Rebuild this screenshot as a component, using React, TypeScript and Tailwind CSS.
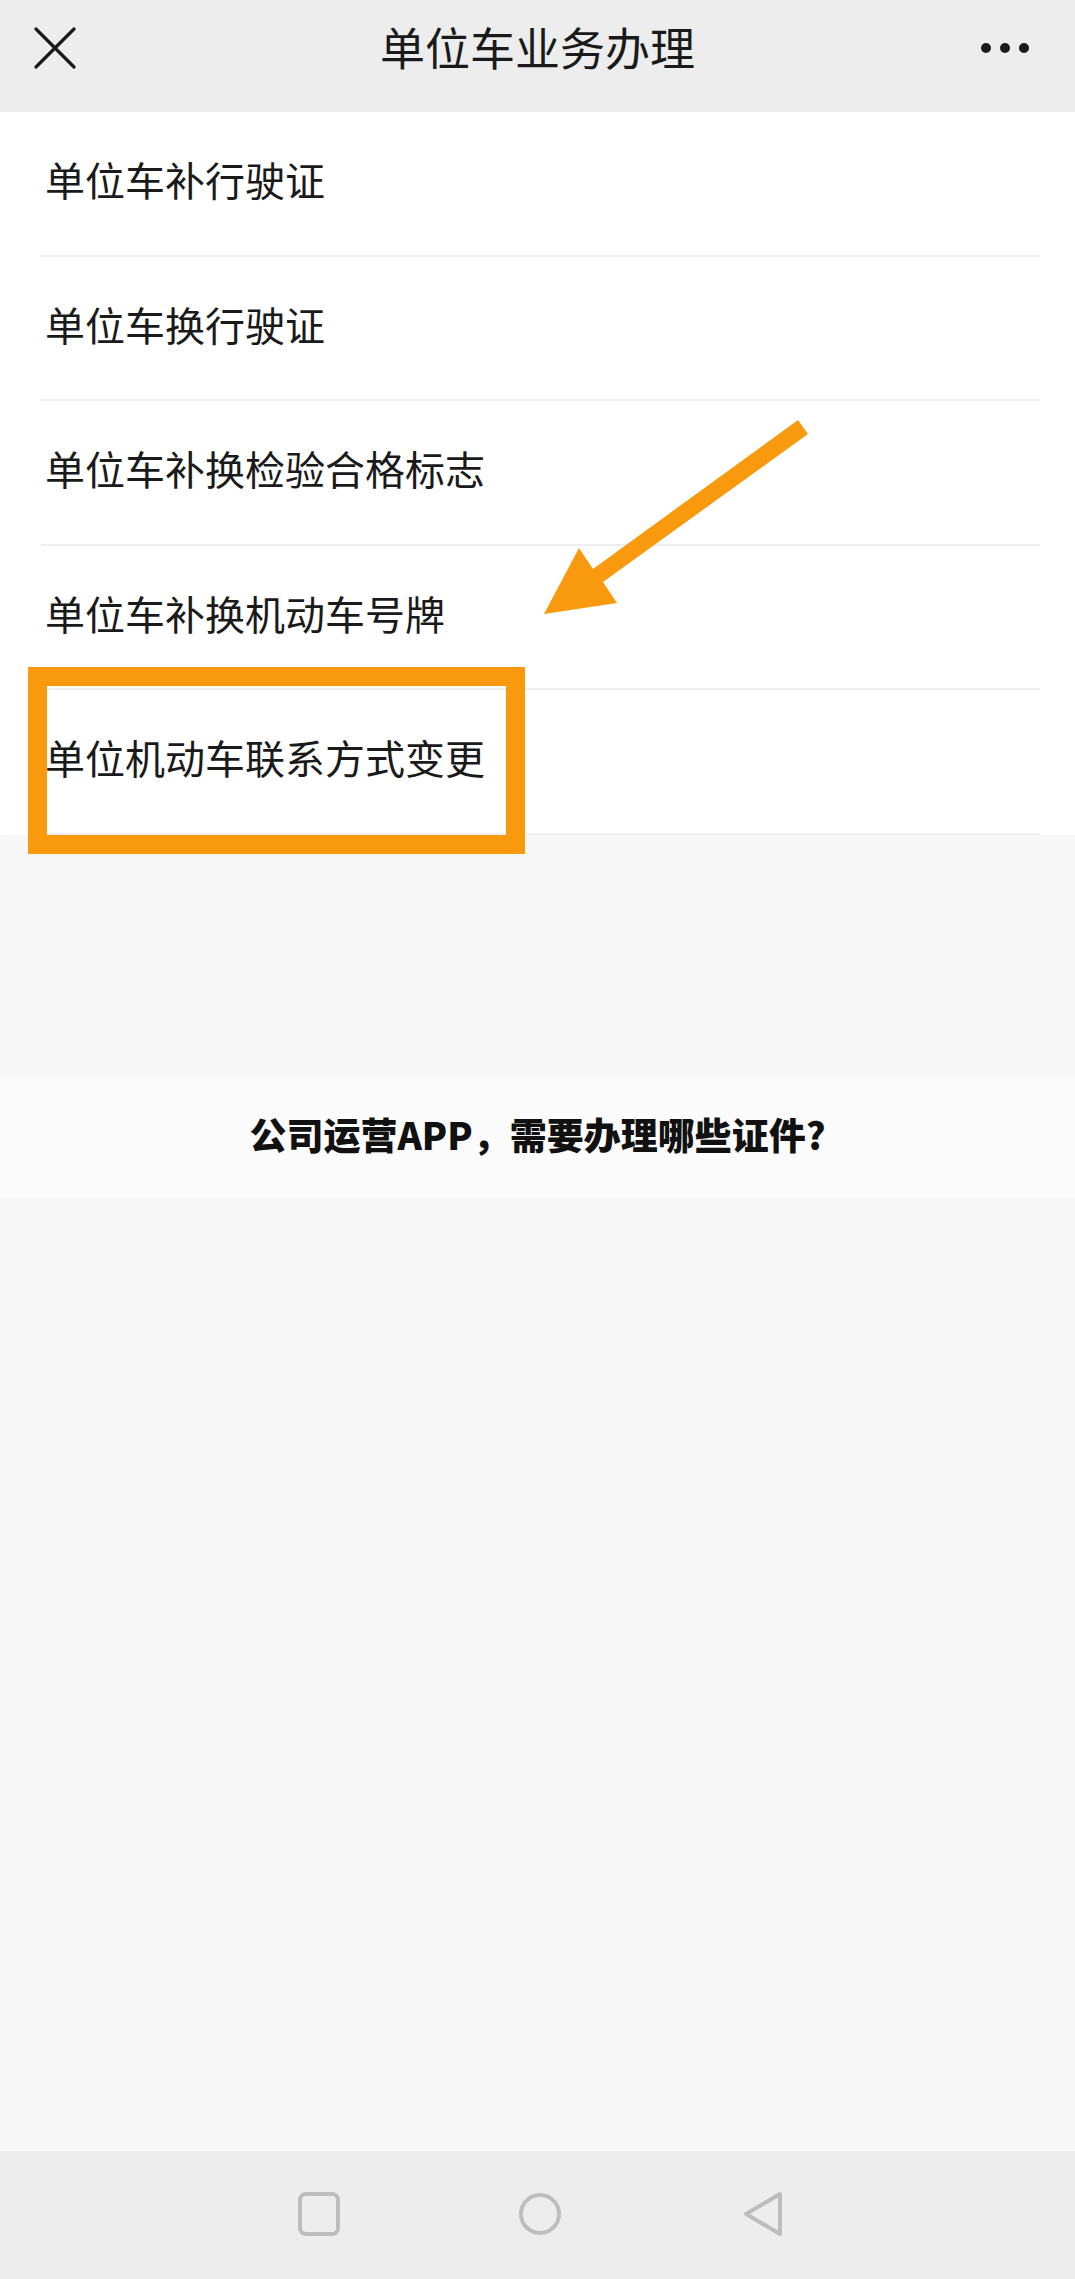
import React from 'react';

const items = [
  '单位车补行驶证',
  '单位车换行驶证',
  '单位车补换检验合格标志',
  '单位车补换机动车号牌',
  '单位机动车联系方式变更',
];

const cjk = { fontFamily: '"Noto Sans CJK SC", "Noto Sans", sans-serif' };

export default function App() {
  return (
    <div className="relative w-[1075px] h-[2279px] flex flex-col bg-[#f7f7f7] overflow-hidden" style={cjk}>
      {/* 顶部标题栏 */}
      <div className="relative h-[112px] shrink-0 bg-[#ededed] flex items-center justify-center">
        <svg className="absolute left-[34px] top-[27px]" width="42" height="42" viewBox="0 0 42 42">
          <path d="M2 2 L40 40 M40 2 L2 40" stroke="#1a1a1a" strokeWidth="3.2" strokeLinecap="round" />
        </svg>
        <div className="text-[45px] leading-none text-[#1a1a1a] -mt-[19px]">单位车业务办理</div>
        <div className="absolute right-[46px] top-[43px] flex gap-[9px]">
          <span className="w-[10px] h-[10px] rounded-full bg-[#1a1a1a]" />
          <span className="w-[10px] h-[10px] rounded-full bg-[#1a1a1a]" />
          <span className="w-[10px] h-[10px] rounded-full bg-[#1a1a1a]" />
        </div>
      </div>

      {/* 业务列表 */}
      <div className="bg-white shrink-0">
        {items.map((label) => (
          <div
            key={label}
            className="ml-[41px] mr-[35px] h-[144.5px] border-b-2 border-[#eeeeee] flex items-center pl-[4px] pb-[8px]"
          >
            <span className="text-[40px] leading-none text-[#1a1a1a]">{label}</span>
          </div>
        ))}
      </div>

      <div className="h-[243px] shrink-0" />

      {/* 推荐文章 */}
      <div className="h-[119px] shrink-0 bg-[#fbfbfb] flex items-center justify-center pb-[6px]">
        <span className="text-[37px] leading-none font-black text-[#111111]">公司运营APP，需要办理哪些证件?</span>
      </div>

      <div className="flex-1" />

      {/* 底部导航 */}
      <div className="h-[128px] shrink-0 bg-[#ededed] flex items-center justify-center pb-[2px]">
        <div className="w-[1075px] relative h-[48px]">
          <svg className="absolute left-[297px] top-[2px]" width="44" height="44" viewBox="0 0 44 44">
            <rect x="3" y="2" width="38" height="40" rx="6" fill="none" stroke="#bdbdbd" strokeWidth="4" />
          </svg>
          <svg className="absolute left-[518px] top-[2px]" width="44" height="44" viewBox="0 0 44 44">
            <circle cx="22" cy="22" r="19" fill="none" stroke="#bdbdbd" strokeWidth="4" />
          </svg>
          <svg className="absolute left-[742px] top-[0px]" width="44" height="48" viewBox="0 0 44 48">
            <path d="M38 4 L38 44 L4 24 Z" fill="none" stroke="#bdbdbd" strokeWidth="4" strokeLinejoin="round" />
          </svg>
        </div>
      </div>

      {/* 标注：方框和箭头 */}
      <div className="absolute left-[28px] top-[667px] w-[497px] h-[187px] border-[19px] border-[#f99a0e] pointer-events-none" />
      <svg className="absolute left-0 top-0 pointer-events-none" width="1075" height="900" viewBox="0 0 1075 900">
        <polygon
          points="798,420 593,569 579,548 544,614 617,603 603,582 808,434"
          fill="#f99a0e"
        />
      </svg>
    </div>
  );
}
